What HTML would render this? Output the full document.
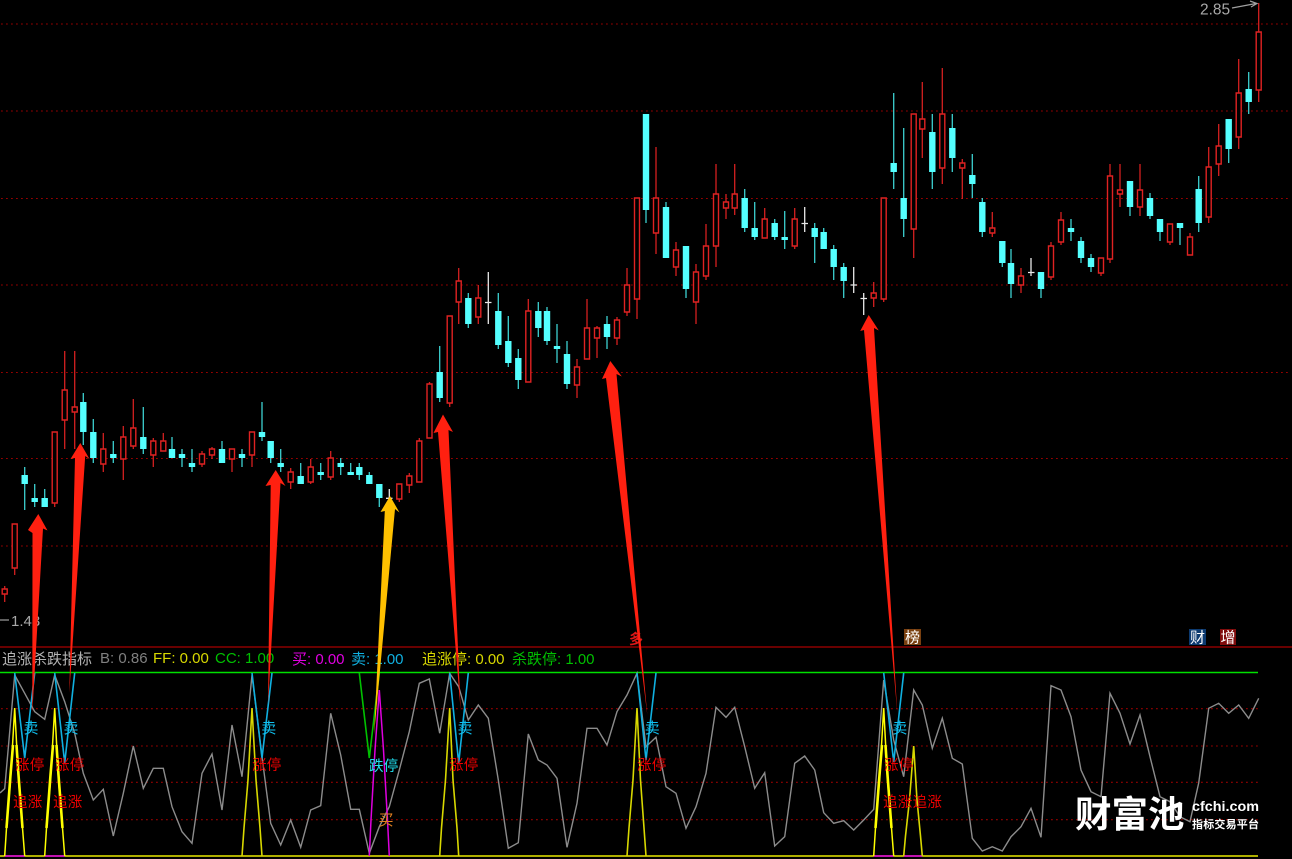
<!DOCTYPE html>
<html><head><meta charset="utf-8"><style>
html,body{margin:0;padding:0;background:#000;width:1292px;height:859px;overflow:hidden}
svg{position:absolute;left:0;top:0;display:block}
text{font-family:"Liberation Sans","Noto Sans CJK SC",sans-serif}
</style></head><body>
<svg width="1292" height="859" viewBox="0 0 1292 859" xmlns="http://www.w3.org/2000/svg">
<rect width="1292" height="859" fill="#000"/>
<g stroke="#960000" stroke-width="1.1" stroke-dasharray="1.8 3.2" fill="none">
<path d="M1 24H1290M1 111H1290M1 198.5H1290M1 285H1290M1 372.5H1290M1 458.5H1290M1 546H1290"/>
<path d="M1 708.7H1258M1 746H1258M1 782.3H1258M1 819.7H1258"/>
</g>
<path d="M0 647H1292" stroke="#a80000" stroke-width="1.3"/>
<path d="M0 672.5H1258" stroke="#00e000" stroke-width="1.4"/>

<!-- red wicks -->
<path fill="none" stroke="#d42020" stroke-width="1.3" d="M4.7 586V589M4.7 594V602M14.7 568V575M54.7 503V507M64.7 351V390M64.7 420V449M74.7 351V407M74.7 412V449M103.3 433V449M103.3 464V472M123.3 426V437M123.3 459V480M133.3 399V428M133.3 446V449M153.3 438V441M153.3 455V467M163.3 433V441M202 451V454M202 464V467M212 447V449M212 455V459M232 459V472M252 455V467M290.7 468V472M290.7 482V489M310.7 459V467M310.7 482V484M330.7 451V458M330.7 477V480M399.3 499V502M409.3 473V476M409.3 485V493M419.3 438V441M429.5 382V384M449.7 403V407M458.7 268V281M458.7 302V324M478.3 285V298M478.3 317V324M528.3 299V311M577 359V367M577 385V398M587 299V328M597 326V328M597 338V358M617 317V320M617 338V345M627 268V285M627 312V316M637 299V319M656 147V198M656 233V254M676 242V250M676 267V276M696 264V272M696 302V324M706 224V246M706 276V280M716 164V194M716 246V267M726 194V202M726 208V219M734.7 164V194M734.7 208V215M764.7 208V219M794.7 208V219M794.7 246V249M873.7 282V293M873.7 298V307M883.7 299V302M913.7 229V258M922.3 82V119M922.3 129V158M942.3 68V114M942.3 168V184M962.3 159V163M962.3 168V199M992.3 212V228M992.3 233V237M1021 268V276M1021 285V293M1051 242V246M1051 277V280M1061 212V220M1061 242V245M1101 273V276M1110 164V176M1110 259V263M1120 164V190M1120 194V207M1140 164V190M1140 207V216M1170 242V245M1190 233V237M1208.7 147V167M1208.7 217V223M1218.7 124V146M1218.7 164V176M1238.7 59V93M1238.7 137V149M1258.7 3V32M1258.7 90V102"/>
<!-- red bodies -->
<path fill="#000" stroke="#e02222" stroke-width="1.4" d="M2.2 589h5V594h-5zM12.2 524h5V568h-5zM52.2 432h5V503h-5zM62.2 390h5V420h-5zM72.2 407h5v5h-5zM100.8 449h5V464h-5zM120.8 437h5V459h-5zM130.8 428h5V446h-5zM150.8 441h5V455h-5zM160.8 441h5V451h-5zM199.5 454h5V464h-5zM209.5 449h5V455h-5zM229.5 449h5V459h-5zM249.5 432h5V455h-5zM288.2 472h5V482h-5zM308.2 467h5V482h-5zM328.2 458h5V477h-5zM396.8 484h5V499h-5zM406.8 476h5V485h-5zM416.8 441h5V482h-5zM427 384h5V438h-5zM447.2 316h5V403h-5zM456.2 281h5V302h-5zM475.8 298h5V317h-5zM525.8 311h5V382h-5zM574.5 367h5V385h-5zM584.5 328h5V359h-5zM594.5 328h5V338h-5zM614.5 320h5V338h-5zM624.5 285h5V312h-5zM634.5 198h5V299h-5zM653.5 198h5V233h-5zM673.5 250h5V267h-5zM693.5 272h5V302h-5zM703.5 246h5V276h-5zM713.5 194h5V246h-5zM723.5 202h5V208h-5zM732.2 194h5V208h-5zM762.2 219h5V238h-5zM792.2 219h5V246h-5zM871.2 293h5V298h-5zM881.2 198h5V299h-5zM911.2 114h5V229h-5zM919.8 119h5V129h-5zM939.8 114h5V168h-5zM959.8 163h5V168h-5zM989.8 228h5V233h-5zM1018.5 276h5V285h-5zM1048.5 246h5V277h-5zM1058.5 220h5V242h-5zM1098.5 258h5V273h-5zM1107.5 176h5V259h-5zM1117.5 190h5V194h-5zM1137.5 190h5V207h-5zM1167.5 224h5V242h-5zM1187.5 237h5V255h-5zM1206.2 167h5V217h-5zM1216.2 146h5V164h-5zM1236.2 93h5V137h-5zM1256.2 32h5V90h-5z"/>
<!-- cyan wicks -->
<path fill="none" stroke="#3cd0d0" stroke-width="1.3" d="M24.7 467V510M34.7 484V507M44.7 489V507M83.3 393V445M93.3 419V463M113.3 441V463M143.3 407V454M172 437V458M182 449V467M192 449V472M222 441V463M242 449V467M262 402V441M270.7 441V463M280.7 449V472M300.7 463V484M320.7 463V480M340.7 458V475M350.7 463V475M359.3 463V480M369.3 472V484M379.3 484V507M439.7 346V402M468.3 293V328M498.3 293V349M508.3 316V367M518.3 349V389M538.3 302V337M547 307V345M557 324V363M567 341V389M607 316V349M646 114V223M666 202V258M686 246V298M744.7 189V232M754.7 202V240M774.7 219V240M784.7 211V249M814.7 223V263M823.7 228V249M833.7 245V280M843.7 263V298M893.7 93V189M903.7 128V237M932.3 114V189M952.3 114V172M972.3 154V198M982.3 198V237M1002.3 241V267M1011 249V298M1041 272V298M1071 219V241M1081 237V263M1091 254V272M1130 181V216M1150 193V219M1160 219V241M1180 223V245M1198.7 176V232M1228.7 119V163M1248.7 72V114"/>
<!-- cyan bodies -->
<path fill="none" stroke="#54ffff" stroke-width="6.4" d="M24.7 475V484M34.7 498V502M44.7 498V507M83.3 402V432M93.3 432V458M113.3 454V458M143.3 437V449M172 449V458M182 454V458M192 463V467M222 449V463M242 454V458M262 432V437M270.7 441V458M280.7 463V467M300.7 476V484M320.7 472V475M340.7 463V467M350.7 472V475M359.3 467V475M369.3 475V484M379.3 484V498M439.7 372V398M468.3 298V324M498.3 311V345M508.3 341V363M518.3 358V380M538.3 311V328M547 311V341M557 346V349M567 354V384M607 324V337M646 114V210M666 207V258M686 246V289M744.7 198V228M754.7 228V237M774.7 223V237M784.7 237V240M814.7 228V237M823.7 232V249M833.7 249V267M843.7 267V281M893.7 163V172M903.7 198V219M932.3 132V172M952.3 128V158M972.3 175V184M982.3 202V232M1002.3 241V263M1011 263V284M1041 272V289M1071 228V232M1081 241V258M1091 258V267M1130 181V207M1150 198V216M1160 219V232M1180 223V228M1198.7 189V223M1228.7 119V149M1248.7 89V102"/>
<!-- white doji -->
<path fill="none" stroke="#e8e8e8" stroke-width="1.3" d="M389.3 489V510M386 498.3H392.5M488.3 272V324M485 302.5H491.5M804.7 207V232M801.5 223.5H808M853.7 267V293M850.5 285H857M863.7 293V315M860.5 298.5H867M1031 258V276M1028 272.5H1034.5"/>

<!-- price labels -->
<path d="M0 620H9" stroke="#a0a0a0" stroke-width="1.2"/>
<text x="11" y="626" font-size="15" fill="#a8a8a8">1.43</text>
<text x="1200" y="14.5" font-size="15.5" fill="#a8a8a8">2.85</text>
<path d="M1232 8L1256 3.5M1250 1L1257 3.5L1251 7" fill="none" stroke="#a0a0a0" stroke-width="1.2"/>

<!-- gray line -->
<polyline fill="none" stroke="#8c8c8c" stroke-width="1.4" points="0,793 4.7,788.7 14.7,675 24.7,693.3 34.7,711.7 44.7,719.3 54.7,675 64.7,701.7 74.7,733.3 83.3,773.3 93.3,800 103.3,789.3 113.3,836 123.3,793.3 133.3,746 143.3,788.3 153.3,768.3 163.3,768.3 172,806.7 182,831.7 192,843.3 202,773.3 212,754 222,810 232,725 242,776.7 252,675 262,756.7 270.7,823.3 280.7,845 290.7,820 300.7,847.3 310.7,810 320.7,805.7 330.7,713.3 340.7,755 350.7,809.3 359.3,809.3 369.3,853.3 379.3,826.7 389.3,806.7 399.3,770 409.3,731.7 419.3,683.3 429.3,679 439.7,733.3 449.7,673.3 458.7,686.7 468.3,720 478.3,705 488.3,718.3 498.3,780 508.3,848.3 518.3,842.7 528.3,734 538.3,760 547,765 557,778.3 567,847.3 577,803.3 587,728.3 597,728.3 607,745 617,711.7 627,695 637,673.3 646,746.7 656,737.3 666,786.7 676,793.3 686,828.3 696,806.7 706,773.3 716,707.3 726,717.3 734.7,707.3 744.7,746.7 754.7,788.3 764.7,772.7 774.7,846 784.7,836.7 794.7,763.3 804.7,756 814.7,770 823.7,812.7 833.7,823.3 843.7,820.7 853.7,830 863.7,820 873.7,809.3 883.7,680 893.7,740 903.7,776.7 913.7,690 922.3,705 932.3,748.3 942.3,718.3 952.3,758.3 962.3,764 972.3,838.3 982.3,851 992.3,846.7 1002.3,851 1011,836.7 1021,826.7 1031,808.3 1041,837.3 1051,685.7 1061,690 1071,716.7 1081,770 1091,791.7 1101,796.7 1110,693.3 1120,713.3 1130,744 1140,715 1150,756.7 1160,796.7 1170,801.7 1180,816.7 1190,821.7 1198.7,783 1208.7,708.3 1218.7,703.3 1228.7,713.3 1238.7,705 1248.7,718.3 1258.7,698.3"/>

<!-- baseline -->
<path d="M0 856H1258" stroke="#c8c800" stroke-width="1.8"/>
<path d="M4.7 856H24.7M44.7 856H64.7M873.7 856H893.7M903.7 856H922.3" stroke="#c800c8" stroke-width="1.8"/>

<!-- magenta triangle -->
<polyline fill="none" stroke="#e000e0" stroke-width="1.5" points="369.3,856 371,820 375,750 379.3,690 383.5,750 387.5,820 389.3,856"/>
<!-- yellow triangles -->
<g fill="none" stroke="#d8d800" stroke-width="1.6">
<polyline points="242,856 244,828 248,780 252,708 256,780 260,828 262,856"/>
<polyline points="439.7,856 441.5,828 445.5,780 449.7,708 453,780 457,828 458.7,856"/>
<polyline points="627,856 629,828 633,780 637,708 640.5,780 644,828 646,856"/>
<polyline points="903.7,856 905.5,836 909.5,800 913.7,746 917,800 920.5,836 922.3,856"/>
</g>
<g fill="none" stroke="#ffff00">
<polyline stroke-width="1.5" points="4.7,856 6.5,828 10.5,780 14.7,708 18.5,780 22.5,828 24.7,856"/>
<polyline stroke-width="1.5" points="44.7,856 46.5,828 50.5,780 54.7,708 58.5,780 62.5,828 64.7,856"/>
<polyline stroke-width="1.5" points="873.7,856 875.5,828 879.5,780 883.7,708 887.5,780 891.5,828 893.7,856"/>
<path stroke-width="2.6" d="M6.5 828L10.5 775L13 745M16.5 745L18.5 775L22.5 828M46.5 828L50.5 775L53 745M56.5 745L58.5 775L62.5 828M875.5 828L879.5 775L882 745M885.5 745L887.5 775L891.5 828"/>
</g>
<!-- sell V lines -->
<g fill="none" stroke="#10b0e0" stroke-width="1.6">
<polyline points="14.7,673 24.7,758 34.7,673"/>
<polyline points="54.7,673 64.7,763 74.7,673"/>
<polyline points="252,673 262,758 272,673"/>
<polyline points="449.7,673 458.7,763 468.3,673"/>
<polyline points="637,673 646,760 656,673"/>
<polyline points="883.7,673 893.7,762 903.7,673"/>
</g>
<polyline fill="none" stroke="#00c000" stroke-width="1.6" points="359.3,673 369.3,758 379.3,673"/>

<!-- header -->
<g font-size="15">
<text x="2" y="664" fill="#b4b4b4">追涨杀跌指标</text>
<text x="100" y="663" fill="#808080">B: 0.86</text>
<text x="153" y="663" fill="#d8d800">FF: 0.00</text>
<text x="215" y="663" fill="#00c000">CC: 1.00</text>
<text x="292" y="664" fill="#e000e0">买: 0.00</text>
<text x="351" y="664" fill="#10b0e0">卖: 1.00</text>
<text x="422" y="664" fill="#d8d800">追涨停: 0.00</text>
<text x="512" y="664" fill="#00c000">杀跌停: 1.00</text>
</g>

<!-- signal labels -->
<g font-size="15" fill="#10c0f0" text-anchor="middle">
<text x="31" y="733">卖</text><text x="71" y="733">卖</text><text x="268.7" y="733">卖</text><text x="465" y="733">卖</text><text x="652.3" y="733">卖</text><text x="899.7" y="733">卖</text>
</g>
<g font-size="14.5" fill="#f00000" letter-spacing="0.3">
<text x="15" y="770">涨停</text><text x="55" y="770">涨停</text><text x="252" y="770">涨停</text><text x="449" y="770">涨停</text><text x="637" y="770">涨停</text><text x="884" y="770">涨停</text>
<text x="13" y="807">追涨</text><text x="53" y="807">追涨</text><text x="883" y="807">追涨追涨</text>
</g>
<text x="369" y="771" font-size="14.5" fill="#20e0f0" letter-spacing="0.3">跌停</text>
<text x="386" y="825" font-size="15" fill="#e08020" text-anchor="middle">买</text>

<!-- badges -->
<rect x="904" y="629" width="17" height="16" fill="#7a4010"/>
<text x="912.5" y="642.5" font-size="15" fill="#fff" text-anchor="middle">榜</text>
<rect x="1189" y="629" width="17" height="16" fill="#0c3a70"/>
<text x="1197.5" y="642.5" font-size="15" fill="#fff" text-anchor="middle">财</text>
<rect x="1220" y="629" width="16" height="16" fill="#800c0c"/>
<text x="1228" y="642.5" font-size="15" fill="#fff" text-anchor="middle">增</text>
<text x="636" y="644" font-size="14" font-weight="700" fill="#e01818" text-anchor="middle">多</text>

<!-- arrows -->
<g fill="#ff2010">
<polygon points="32.3,713 32.5,533 28,530 38.3,514 47.5,530.5 43,528.5"/>
<polygon points="69.3,693 75,458 70.5,459 80.3,443 89.5,459 85.2,456"/>
<polygon points="268,705 270.7,485 265.5,486 275.7,470 285.5,486 280.5,483"/>
<polygon points="460.7,711 438,432 433.5,433 443,414.5 453,432 448.5,430"/>
<polygon points="647.3,715 606,378 602,379 610.3,361 621.8,376.5 616.5,374"/>
<polygon points="897.3,713 864,330 860.2,331 868.7,315 878.8,330.5 874,328"/>
</g>
<polygon fill="#ffc000" points="374,735 384.8,511 380.5,512 390,496 399.5,512.5 395,509"/>

<!-- watermark -->
<text x="1075" y="827" font-size="36.5" font-weight="700" fill="#fff" style="font-family:'Noto Sans CJK SC',sans-serif">财富池</text>
<text x="1192" y="811" font-size="14" font-weight="700" fill="#fff" textLength="67" lengthAdjust="spacingAndGlyphs">cfchi.com</text>
<text x="1192" y="828" font-size="11" font-weight="700" fill="#fff" style="font-family:'Noto Sans CJK SC',sans-serif" textLength="67">指标交易平台</text>
</svg>
</body></html>
